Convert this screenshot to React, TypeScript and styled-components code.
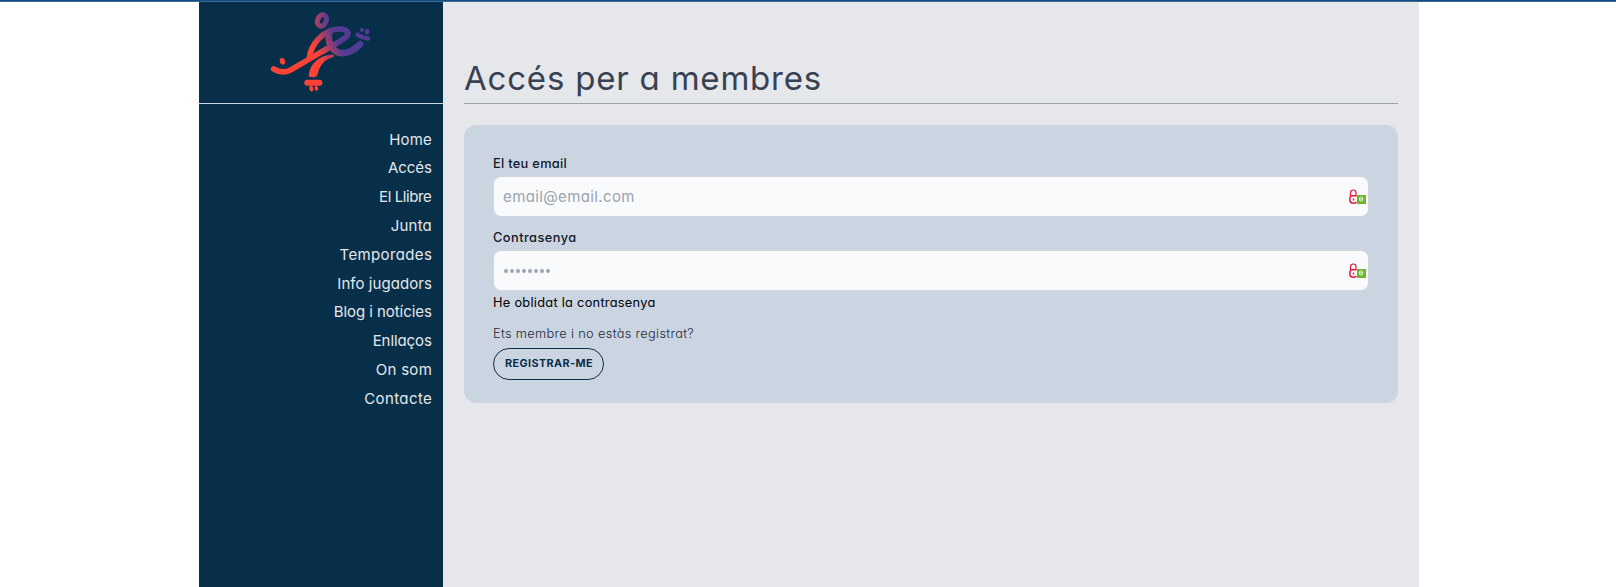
import React from 'react';
import styled, { createGlobalStyle } from 'styled-components';

const GlobalStyle = createGlobalStyle`
  *, *::before, *::after { box-sizing: border-box; }
  body {
    margin: 0;
    background: #fff;
    font-family: Inter, 'Liberation Sans', sans-serif;
    font-feature-settings: 'cv11';
    overflow: hidden;
  }
`;

const Page = styled.div`
  height: 587px;
  display: flex;
  flex-direction: column;
  align-items: center;
`;

const TopBar = styled.div`
  width: 100%;
  height: 2px;
  flex: none;
  background: #154b7c;
  border-bottom: 1px solid #376b99;
`;

const Container = styled.div`
  flex: 1;
  width: 1220px;
  margin-left: 2px;
  display: flex;
`;

const Sidebar = styled.aside`
  width: 244px;
  background: #082f49;
`;

const LogoArea = styled.div`
  height: 102px;
  padding-top: 3px;
  display: flex;
  justify-content: center;
  border-bottom: 1px solid #cbd5e1;
`;

const Menu = styled.nav`
  display: flex;
  flex-direction: column;
  align-items: flex-end;
  padding: 21.7px 11.2px 0 0;
`;

const MenuLink = styled.a<{ $track: number }>`
  height: 28.8px;
  line-height: 28.8px;
  font-size: 15px;
  color: #e5e7eb;
  letter-spacing: ${(p) => p.$track}px;
  margin-right: ${(p) => -p.$track}px;
`;

const Main = styled.main`
  flex: 1;
  background: #e5e7eb;
  padding: 48px 21px 0;
`;

const Title = styled.h1`
  margin: 0 0 21px;
  height: 54px;
  line-height: 56px;
  font-size: 33px;
  font-weight: 400;
  letter-spacing: 0.8px;
  color: #374151;
  border-bottom: 1px solid #9ca3af;
`;

const Card = styled.form`
  height: 278px;
  padding: 28px 29px 0;
  border-radius: 12px;
  background: #cbd5e1;
  display: flex;
  flex-direction: column;
  align-items: flex-start;
`;

const Label = styled.label<{ $track: number }>`
  height: 23px;
  line-height: 21px;
  font-size: 12.8px;
  font-weight: 550;
  letter-spacing: ${(p) => p.$track}px;
  color: #111827;
`;

const Field = styled.div`
  width: 100%;
  height: 41px;
  margin-bottom: 10px;
  padding: 0 2px 0 9px;
  display: flex;
  align-items: center;
  justify-content: space-between;
  background: #f9fafb;
  border: 1px solid #d1d5db;
  border-radius: 8px;

  &:last-of-type { margin-bottom: 0; }
`;

const Placeholder = styled.span`
  font-size: 15px;
  letter-spacing: 0.38px;
  color: #9ca3af;
`;

const Dots = styled.span`
  display: flex;
  gap: 2px;
  padding-left: 1px;
`;

const Dot = styled.i`
  width: 4px;
  height: 4px;
  border-radius: 50%;
  background: #9ca3af;
`;

const Forgot = styled.a`
  height: 22px;
  line-height: 23px;
  font-size: 12.8px;
  letter-spacing: 0.27px;
  color: #000;
`;

const Question = styled.p`
  margin: 9px 0 4px;
  height: 22px;
  line-height: 23px;
  font-size: 12.8px;
  font-weight: 300;
  letter-spacing: 0.33px;
  color: #1f2937;
`;

const RegisterButton = styled.button`
  width: 111px;
  height: 32px;
  padding: 0 0 1px 1px;
  font: 700 10.8px Inter, 'Liberation Sans', sans-serif;
  letter-spacing: 0.42px;
  color: #082f49;
  background: transparent;
  border: 1px solid #082f49;
  border-radius: 16px;
`;

const LogoMark = () => (
  <svg width="120" height="95" viewBox="3 0 360 285" fill="none">
    <defs>
      <linearGradient id="fade" gradientUnits="userSpaceOnUse" x1="90" y1="-41" x2="155" y2="-70">
        <stop offset="0" stopColor="#ff4136" />
        <stop offset="1" stopColor="#533a94" />
      </linearGradient>
    </defs>
    <g stroke="url(#fade)" strokeLinecap="round" strokeLinejoin="round">
      <ellipse cx="186" cy="46.500" rx="13" ry="17.500" strokeWidth="15" transform="rotate(24 186 46.500)" />
      <path strokeWidth="17" d="M149 156C151 124 188 73 235 72C259 71 272 83 257 97C245 107 220 120 190 138" />
      <path strokeWidth="17" d="M201 131L94 194C76 205 58 202 41 192" />
      <path strokeWidth="20" d="M207 88C202 125 228 147 254 144C275 141 287 130 300 118" />
      <path strokeWidth="13" d="M293 89Q307 99 324 101" />
    </g>
    <g fill="url(#fade)">
      <path d="M147 215C145 183 174 151 213 149Q224 148 223 153Q222 157 211 160C191 167 179 183 173 207Q171 217 160 217Z" />
      <rect x="133" y="224" width="54" height="18" rx="9" />
      <ellipse cx="154" cy="251" rx="6" ry="8.500" transform="rotate(-15 154 251)" />
      <ellipse cx="169" cy="250" rx="5.500" ry="7.500" transform="rotate(-15 169 250)" />
      <ellipse cx="67.500" cy="169" rx="8" ry="10" transform="rotate(-15 67 169)" />
      <ellipse cx="306" cy="75" rx="5.500" ry="7" />
      <ellipse cx="321" cy="80" rx="6.500" ry="9" />
    </g>
  </svg>
);

const LockBadge = () => (
  <svg width="17" height="16" viewBox="0 0 17 16" fill="none">
    <path d="M1.500 7V4Q1.500 1 4.200 1Q7 1 7 4V6.500" stroke="#e5173f" strokeWidth="1.200" />
    <path d="M7.500 6.800H2Q.8 8 .8 10.500Q.8 14.300 4.500 14.300Q6 14.300 7.500 13.200" stroke="#e5173f" strokeWidth="1.500" />
    <path d="M4.500 9.500V11.500" stroke="#e5173f" strokeWidth="1.400" />
    <rect x="8" y="6" width="9" height="9" fill="#6eb52f" />
    <rect x="10.600" y="8" width="3" height="4" rx="1" stroke="#e4f2d8" />
    <path d="M10.500 10H14" stroke="#e4f2d8" />
  </svg>
);

const links = [
  { text: 'Home', track: 0.2 },
  { text: 'Accés', track: -0.1 },
  { text: 'El Llibre', track: -0.4 },
  { text: 'Junta', track: 0.2 },
  { text: 'Temporades', track: 0.36 },
  { text: 'Info jugadors', track: 0.05 },
  { text: 'Blog i notícies', track: -0.06 },
  { text: 'Enllaços', track: -0.1 },
  { text: 'On som', track: 0.3 },
  { text: 'Contacte', track: 0.4 },
];

export default function App() {
  return (
    <Page>
      <GlobalStyle />
      <TopBar />
      <Container>
        <Sidebar>
          <LogoArea><LogoMark /></LogoArea>
          <Menu>
            {links.map((l) => (
              <MenuLink key={l.text} $track={l.track}>{l.text}</MenuLink>
            ))}
          </Menu>
        </Sidebar>
        <Main>
          <Title>Accés per a membres</Title>
          <Card>
            <Label $track={0.3}>El teu email</Label>
            <Field>
              <Placeholder>email@email.com</Placeholder>
              <LockBadge />
            </Field>
            <Label $track={0.45}>Contrasenya</Label>
            <Field>
              <Dots>{Array.from({ length: 8 }, (_, i) => <Dot key={i} />)}</Dots>
              <LockBadge />
            </Field>
            <Forgot>He oblidat la contrasenya</Forgot>
            <Question>Ets membre i no estàs registrat?</Question>
            <RegisterButton type="button">REGISTRAR-ME</RegisterButton>
          </Card>
        </Main>
      </Container>
    </Page>
  );
}
